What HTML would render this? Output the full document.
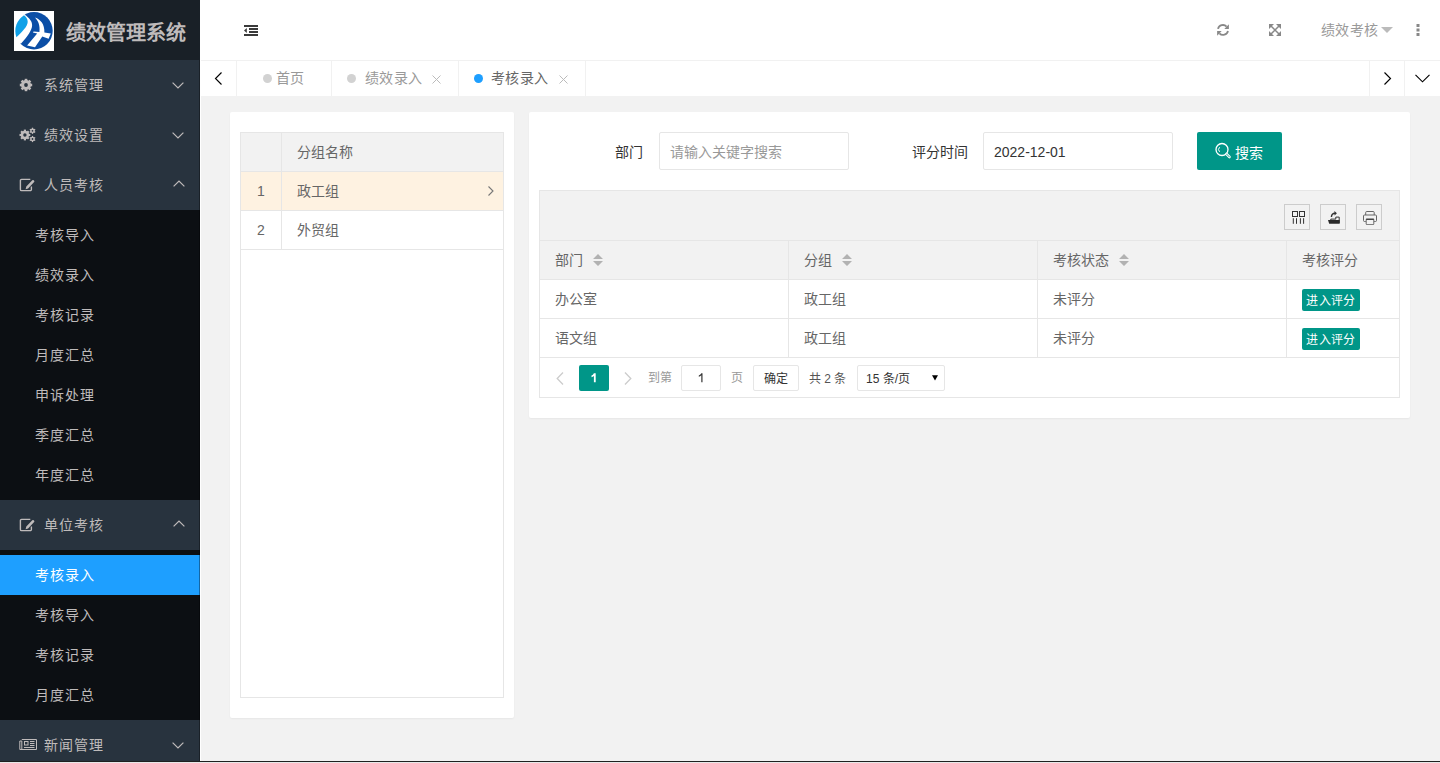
<!DOCTYPE html>
<html lang="zh-CN">
<head>
<meta charset="utf-8">
<style>
*{margin:0;padding:0;box-sizing:border-box;}
html,body{width:1440px;height:763px;overflow:hidden;font-family:"Liberation Sans",sans-serif;font-size:14px;color:#666;background:#f2f2f2;}
.abs{position:absolute;}
#side{position:absolute;left:0;top:0;width:200px;height:763px;background:#28333E;}
#logo{position:absolute;left:0;top:0;width:200px;height:60px;background:#192027;}
#logo .img{position:absolute;left:14px;top:11px;width:40px;height:40px;background:#fff;}
#logo .t{position:absolute;left:66px;top:17.5px;font-size:20px;font-weight:bold;color:rgb(191,187,187);line-height:30px;}
.mi{position:absolute;left:0;width:200px;height:50px;line-height:50px;color:rgb(191,187,187);}
.mi .ic{position:absolute;left:19px;top:18px;}
.mi .tx{position:absolute;left:44px;top:0;letter-spacing:1px;}
.mi .ar{position:absolute;left:172px;top:82px;}
.sub{position:absolute;left:0;width:200px;background:#0c0f13;}
.si{position:absolute;left:0;width:200px;height:40px;line-height:40px;color:rgb(191,187,187);}
.si span{position:absolute;left:35px;letter-spacing:1px;}
.si.on{background:#1E9FFF;color:#fff;}
#head{position:absolute;left:200px;top:0;width:1240px;height:60px;background:#fff;}
#tabs{position:absolute;left:200px;top:60px;width:1240px;height:36px;background:#fff;border-top:1px solid #f1f1f1;}
.tab{position:absolute;top:0;height:35px;line-height:35px;border-right:1px solid #f1f1f1;color:#999;}
.dot{position:absolute;width:9px;height:9px;border-radius:50%;background:#d2d2d2;top:13px;}
.card{position:absolute;background:#fff;border-radius:2px;box-shadow:0 1px 2px 0 rgba(0,0,0,.05);}
.bd{border:1px solid #e6e6e6;}
.sort{position:absolute;top:142px;}
.tb{position:absolute;top:92px;width:26px;height:26px;border:1px solid #ccc;}
</style>
</head>
<body>
<div id="side">
  <div id="logo">
    <div class="img">
      <svg width="40" height="40" viewBox="0 0 40 40">
        <circle cx="20" cy="19.8" r="18.7" fill="#0b4ea6"/>
        <path d="M10.5 3.6C15.5 7 18.5 11 18.1 14.7C17.8 19 14 25 7.1 32.5L0 33V0H10.5Z" fill="#fff"/>
        <path d="M10 4.2A18.7 18.7 0 0 0 2.4 26.2C8 21 13.5 15.5 13.7 11C13.8 8 12 5.5 10 4.2Z" fill="#10a1e8"/>
        <path d="M21 6.5C26.5 8.5 30.8 13 30.4 21.6L36.8 22.6L34.6 27.8L28.3 25.6L21 36.3L13.1 34.6L23.2 22.6L18.9 21.4L19.6 20.4L25.4 20.9C26.2 15 24.5 10 21 6.5Z" fill="#fff"/>
      </svg>
    </div>
    <div class="t">绩效管理系统</div>
  </div>
  <div class="mi" style="top:60px"><svg class="ic" width="16" height="16" viewBox="0 0 16 16" style="left:19px;top:18px"><g fill="rgb(191,187,187)"><circle cx="7" cy="7" r="5"/><rect x="5.7" y="0.8" width="2.6" height="12.4"/><rect x="0.8" y="5.7" width="12.4" height="2.6"/><rect x="5.7" y="0.8" width="2.6" height="12.4" transform="rotate(45 7 7)"/><rect x="5.7" y="0.8" width="2.6" height="12.4" transform="rotate(-45 7 7)"/></g><circle cx="7" cy="7" r="1.9" fill="#28333E"/></svg><span class="tx">系统管理</span></div>
  <div class="mi" style="top:110px"><svg class="ic" width="20" height="18" viewBox="0 0 20 18" style="left:18px;top:16px"><circle cx="6.9" cy="9" r="4.2" fill="rgb(191,187,187)"/><rect x="5.800000000000001" y="3.5999999999999996" width="2.2" height="10.8" fill="rgb(191,187,187)" transform="rotate(0.0 6.9 9)"/><rect x="5.800000000000001" y="3.5999999999999996" width="2.2" height="10.8" fill="rgb(191,187,187)" transform="rotate(45.0 6.9 9)"/><rect x="5.800000000000001" y="3.5999999999999996" width="2.2" height="10.8" fill="rgb(191,187,187)" transform="rotate(90.0 6.9 9)"/><rect x="5.800000000000001" y="3.5999999999999996" width="2.2" height="10.8" fill="rgb(191,187,187)" transform="rotate(135.0 6.9 9)"/><circle cx="6.9" cy="9" r="1.7" fill="#28333E"/><circle cx="14.5" cy="4.8" r="2.3" fill="rgb(191,187,187)"/><rect x="13.85" y="1.6999999999999997" width="1.3" height="6.2" fill="rgb(191,187,187)" transform="rotate(0.0 14.5 4.8)"/><rect x="13.85" y="1.6999999999999997" width="1.3" height="6.2" fill="rgb(191,187,187)" transform="rotate(60.0 14.5 4.8)"/><rect x="13.85" y="1.6999999999999997" width="1.3" height="6.2" fill="rgb(191,187,187)" transform="rotate(120.0 14.5 4.8)"/><circle cx="14.5" cy="4.8" r="0.9" fill="#28333E"/><circle cx="14.5" cy="13" r="2.3" fill="rgb(191,187,187)"/><rect x="13.85" y="9.9" width="1.3" height="6.2" fill="rgb(191,187,187)" transform="rotate(0.0 14.5 13)"/><rect x="13.85" y="9.9" width="1.3" height="6.2" fill="rgb(191,187,187)" transform="rotate(60.0 14.5 13)"/><rect x="13.85" y="9.9" width="1.3" height="6.2" fill="rgb(191,187,187)" transform="rotate(120.0 14.5 13)"/><circle cx="14.5" cy="13" r="0.9" fill="#28333E"/></svg><span class="tx">绩效设置</span></div>
  <div class="mi" style="top:160px"><svg class="ic" width="16" height="14" viewBox="0 0 16 14" style="left:19px;top:18px"><path d="M11.3 1.4H2.6a1.2 1.2 0 0 0-1.2 1.2v8.8a1.2 1.2 0 0 0 1.2 1.2h8.6a1.2 1.2 0 0 0 1.2-1.2V8.6" stroke="rgb(191,187,187)" stroke-width="1.4" fill="none"/><path d="M6.6 11.2l.7-2.6 6-6.3a1 1 0 0 1 1.4 0l.4.4a1 1 0 0 1 0 1.4l-6 6.3z" fill="rgb(191,187,187)"/></svg><span class="tx">人员考核</span></div>
  <div class="sub" style="top:210px;height:290px">
    <div class="si" style="top:5px"><span>考核导入</span></div>
    <div class="si" style="top:45px"><span>绩效录入</span></div>
    <div class="si" style="top:85px"><span>考核记录</span></div>
    <div class="si" style="top:125px"><span>月度汇总</span></div>
    <div class="si" style="top:165px"><span>申诉处理</span></div>
    <div class="si" style="top:205px"><span>季度汇总</span></div>
    <div class="si" style="top:245px"><span>年度汇总</span></div>
  </div>
  <div class="mi" style="top:500px"><svg class="ic" width="16" height="14" viewBox="0 0 16 14" style="left:19px;top:18px"><path d="M11.3 1.4H2.6a1.2 1.2 0 0 0-1.2 1.2v8.8a1.2 1.2 0 0 0 1.2 1.2h8.6a1.2 1.2 0 0 0 1.2-1.2V8.6" stroke="rgb(191,187,187)" stroke-width="1.4" fill="none"/><path d="M6.6 11.2l.7-2.6 6-6.3a1 1 0 0 1 1.4 0l.4.4a1 1 0 0 1 0 1.4l-6 6.3z" fill="rgb(191,187,187)"/></svg><span class="tx">单位考核</span></div>
  <div class="sub" style="top:550px;height:170px">
    <div class="si on" style="top:5px"><span>考核录入</span></div>
    <div class="si" style="top:45px"><span>考核导入</span></div>
    <div class="si" style="top:85px"><span>考核记录</span></div>
    <div class="si" style="top:125px"><span>月度汇总</span></div>
  </div>
  <div class="mi" style="top:720px"><svg class="ic" width="18" height="13" viewBox="0 0 18 13" style="left:19px;top:18px"><g fill="none" stroke="rgb(191,187,187)" stroke-width="1"><path d="M2.8 1.5H17.5V11.5H0.8V3H2.8V11.5"/><rect x="5.5" y="3.5" width="3.5" height="3.5"/><path d="M11 3.5H15.5M11 5.5H15.5M11 7.5H15.5M5 9.5H15.5"/></g></svg><span class="tx">新闻管理</span></div>
  <svg class="abs" style="left:172px;top:82px" width="12" height="7" viewBox="0 0 12 7"><path d="M0.6 0.6L6 6l5.4-5.4" stroke="rgb(191,187,187)" stroke-width="1.2" fill="none"/></svg>
  <svg class="abs" style="left:172px;top:132px" width="12" height="7" viewBox="0 0 12 7"><path d="M0.6 0.6L6 6l5.4-5.4" stroke="rgb(191,187,187)" stroke-width="1.2" fill="none"/></svg>
  <svg class="abs" style="left:173px;top:180px" width="12" height="7" viewBox="0 0 12 7"><path d="M0.6 6.4L6 1l5.4 5.4" stroke="rgb(191,187,187)" stroke-width="1.2" fill="none"/></svg>
  <svg class="abs" style="left:173px;top:520px" width="12" height="7" viewBox="0 0 12 7"><path d="M0.6 6.4L6 1l5.4 5.4" stroke="rgb(191,187,187)" stroke-width="1.2" fill="none"/></svg>
  <svg class="abs" style="left:172px;top:742px" width="12" height="7" viewBox="0 0 12 7"><path d="M0.6 0.6L6 6l5.4-5.4" stroke="rgb(191,187,187)" stroke-width="1.2" fill="none"/></svg>
</div>

<div id="head">
  <svg class="abs" style="left:44px;top:25px" width="14" height="11" viewBox="0 0 14 11"><path d="M0 1h14M5 4h9M5 7h9M0 10h14" stroke="#3a3a3a" stroke-width="1.8"/><path d="M0 5.5l2.8-2.5v5z" fill="#3a3a3a"/></svg>
  <svg class="abs" style="left:1016px;top:23px" width="14" height="14" viewBox="0 0 14 14"><path d="M2 5.9A5.1 5.1 0 0 1 10.6 3.6" stroke="#888" stroke-width="1.8" fill="none"/><path d="M12.9 1.2V5.9H8.3Z" fill="#888"/><path d="M12 8A5.1 5.1 0 0 1 3.4 10.4" stroke="#888" stroke-width="1.8" fill="none"/><path d="M1.1 8.1H5.7L1.1 12.7Z" fill="#888"/></svg>
  <svg class="abs" style="left:1068px;top:23px" width="14" height="14" viewBox="0 0 14 14"><path d="M2.5 2.5l9 9M11.5 2.5l-9 9" stroke="#888" stroke-width="1.5"/><path d="M1 1h5l-5 5zM13 1h-5l5 5zM1 13h5l-5-5zM13 13h-5l5-5z" fill="#888"/></svg>
  <span class="abs" style="left:1121px;top:20px;line-height:20px;color:#999;letter-spacing:0.3px">绩效考核</span>
  <svg class="abs" style="left:1181px;top:27px" width="12" height="7" viewBox="0 0 12 7"><path d="M0 0h12l-6 6z" fill="#bbb"/></svg>
  <svg class="abs" style="left:1216px;top:24px" width="4" height="12" viewBox="0 0 4 12"><rect x="0.5" y="0" width="3" height="3" fill="#888"/><rect x="0.5" y="4.5" width="3" height="3" fill="#888"/><rect x="0.5" y="9" width="3" height="3" fill="#888"/></svg>
</div>

<div id="tabs">
  <div class="tab" style="left:0;width:37px;"><svg class="abs" style="left:14px;top:11px" width="9" height="13" viewBox="0 0 9 13"><path d="M7.5 0.5L1.5 6.5l6 6" stroke="#000" stroke-width="1.15" fill="none"/></svg></div>
  <div class="tab" style="left:37px;width:95px;"><span class="dot" style="left:26px"></span><span class="abs" style="left:39px">首页</span></div>
  <div class="tab" style="left:132px;width:127px;"><span class="dot" style="left:15px"></span><span class="abs" style="left:33px;letter-spacing:0.4px">绩效录入</span><svg class="abs" style="left:100px;top:14px" width="9" height="9" viewBox="0 0 9 9"><path d="M0.5 0.5l8 8M8.5 0.5l-8 8" stroke="#bbb" stroke-width="1"/></svg></div>
  <div class="tab" style="left:259px;width:127px;"><span class="dot" style="left:15px;background:#1e9fff"></span><span class="abs" style="left:32px;color:#666;letter-spacing:0.4px">考核录入</span><svg class="abs" style="left:100px;top:14px" width="9" height="9" viewBox="0 0 9 9"><path d="M0.5 0.5l8 8M8.5 0.5l-8 8" stroke="#bbb" stroke-width="1"/></svg></div>
  <div class="tab" style="left:1169px;width:36px;border-left:1px solid #f1f1f1;"><svg class="abs" style="left:13px;top:11px" width="9" height="13" viewBox="0 0 9 13"><path d="M1.5 0.5l6 6-6 6" stroke="#000" stroke-width="1.15" fill="none"/></svg></div>
  <div class="tab" style="left:1205px;width:35px;border-right:none"><svg class="abs" style="left:10px;top:13px" width="15" height="9" viewBox="0 0 15 9"><path d="M0.5 0.8l7 7 7-7" stroke="#000" stroke-width="1.15" fill="none"/></svg></div>
</div>

<!-- left card -->
<div class="card" style="left:230px;top:112px;width:284px;height:606px;">
  <div class="abs bd" style="left:10px;top:20px;width:264px;height:566px;"></div>
  <div class="abs" style="left:11px;top:21px;width:262px;height:39px;background:#f2f2f2;border-bottom:1px solid #e6e6e6"></div>
  <div class="abs" style="left:11px;top:60px;width:262px;height:39px;background:#fef2e1;border-bottom:1px solid #e6e6e6"></div>
  <div class="abs" style="left:11px;top:99px;width:262px;height:39px;background:#fff;border-bottom:1px solid #e6e6e6"></div>
  <div class="abs" style="left:51px;top:21px;width:1px;height:117px;background:#e6e6e6"></div>
  <span class="abs" style="left:67px;top:30px;line-height:20px">分组名称</span>
  <span class="abs" style="left:27px;top:69px;line-height:20px">1</span>
  <span class="abs" style="left:67px;top:69px;line-height:20px">政工组</span>
  <svg class="abs" style="left:258px;top:73.5px" width="6" height="10" viewBox="0 0 6 10"><path d="M0.5 0.5l4.5 4.5-4.5 4.5" stroke="#777" stroke-width="1.1" fill="none"/></svg>
  <span class="abs" style="left:27px;top:108px;line-height:20px">2</span>
  <span class="abs" style="left:67px;top:108px;line-height:20px">外贸组</span>
</div>

<!-- right card -->
<div class="card" style="left:529px;top:112px;width:881px;height:306px;">
  <span class="abs" style="left:86px;top:30px;line-height:20px;color:#333">部门</span>
  <div class="abs" style="left:130px;top:20px;width:190px;height:38px;border:1px solid #e6e6e6;border-radius:2px;"><span class="abs" style="left:10px;top:9px;line-height:20px;color:#999">请输入关键字搜索</span></div>
  <span class="abs" style="left:383px;top:30px;line-height:20px;color:#333">评分时间</span>
  <div class="abs" style="left:454px;top:20px;width:190px;height:38px;border:1px solid #e6e6e6;border-radius:2px;"><span class="abs" style="left:10px;top:9px;line-height:20px;color:#333">2022-12-01</span></div>
  <div class="abs" style="left:668px;top:20px;width:85px;height:38px;background:#009688;border-radius:2px;color:#fff;">
    <svg class="abs" style="left:18px;top:10px" width="18" height="18" viewBox="0 0 18 18"><circle cx="7" cy="7.5" r="6" stroke="#fff" stroke-width="1.3" fill="none"/><path d="M4.6 5.2a3.2 3.2 0 0 0 0 4.6" stroke="#fff" stroke-width="1" fill="none"/><path d="M11.5 12l3 3" stroke="#fff" stroke-width="2.6" stroke-linecap="round"/><path d="M11.5 12l3 3" stroke="#009688" stroke-width="0.9" stroke-linecap="round"/></svg>
    <span class="abs" style="left:38px;top:11px;line-height:20px;">搜索</span>
  </div>
  <!-- table -->
  <div class="abs bd" style="left:10px;top:78px;width:861px;height:208px;"></div>
  <div class="abs" style="left:11px;top:79px;width:859px;height:50px;background:#f2f2f2;border-bottom:1px solid #e6e6e6"></div>
  <div class="abs" style="left:11px;top:129px;width:859px;height:39px;background:#f2f2f2;border-bottom:1px solid #e6e6e6"></div>
  <div class="abs" style="left:11px;top:168px;width:859px;height:39px;border-bottom:1px solid #e6e6e6"></div>
  <div class="abs" style="left:11px;top:207px;width:859px;height:39px;border-bottom:1px solid #e6e6e6"></div>
  <div class="abs" style="left:259px;top:129px;width:1px;height:117px;background:#e6e6e6"></div>
  <div class="abs" style="left:508px;top:129px;width:1px;height:117px;background:#e6e6e6"></div>
  <div class="abs" style="left:757px;top:129px;width:1px;height:117px;background:#e6e6e6"></div>
  <div class="tb" style="left:755px"><svg class="abs" style="left:7px;top:6px" width="14" height="14" viewBox="0 0 14 14"><g fill="none" stroke="#333" stroke-width="1"><rect x="0.5" y="0.5" width="5" height="5"/><rect x="7.5" y="0.5" width="5" height="5"/><path d="M1.3 7.2v5.6M4.5 7.2v5.6M8.4 7.2v5.6M11.6 7.2v5.6"/></g></svg></div>
  <div class="tb" style="left:791px"><svg class="abs" style="left:7px;top:6px" width="14" height="14" viewBox="0 0 14 14"><path d="M2.8 9V8.1H7.8V6.1H11.2V12" fill="none" stroke="#333" stroke-width="1"/><path d="M0 9H11.7V12.7H1.2Z" fill="#2a2a2a"/><path d="M3.4 6C3.5 3.8 5 2.4 7.2 2.3" stroke="#333" stroke-width="1.4" fill="none"/><path d="M6.4 0.1L8.9 2.3 6.6 4.4Z" fill="#333"/></svg></div>
  <div class="tb" style="left:827px"><svg class="abs" style="left:6px;top:6px" width="14" height="14" viewBox="0 0 14 14"><g fill="none" stroke="#666" stroke-width="1"><path d="M2.7 4V1.5a1 1 0 0 1 1-1h6.5a1 1 0 0 1 1 1V4"/><path d="M2.8 10.5H1.5a1 1 0 0 1-1-1V5a1 1 0 0 1 1-1h11a1 1 0 0 1 1 1v4.5a1 1 0 0 1-1 1h-1.3"/><path d="M3.2 8.3h7.6v4.6a.8 .8 0 0 1-.8.8H4a.8 .8 0 0 1-.8-.8z"/></g><path d="M3.2 8.3h7.6" stroke="#444" stroke-width="1.4"/></svg></div>
  <span class="abs" style="left:26px;top:138px;line-height:20px">部门</span>
  <svg class="sort" style="left:64px" width="10" height="12" viewBox="0 0 10 12"><path d="M0 5L5 0l5 5zM0 7h10l-5 5z" fill="#b2b2b2"/></svg>
  <span class="abs" style="left:275px;top:138px;line-height:20px">分组</span>
  <svg class="sort" style="left:313px" width="10" height="12" viewBox="0 0 10 12"><path d="M0 5L5 0l5 5zM0 7h10l-5 5z" fill="#b2b2b2"/></svg>
  <span class="abs" style="left:524px;top:138px;line-height:20px">考核状态</span>
  <svg class="sort" style="left:590px" width="10" height="12" viewBox="0 0 10 12"><path d="M0 5L5 0l5 5zM0 7h10l-5 5z" fill="#b2b2b2"/></svg>
  <span class="abs" style="left:773px;top:138px;line-height:20px">考核评分</span>
  <span class="abs" style="left:26px;top:177px;line-height:20px">办公室</span>
  <span class="abs" style="left:275px;top:177px;line-height:20px">政工组</span>
  <span class="abs" style="left:524px;top:177px;line-height:20px">未评分</span>
  <span class="abs" style="left:26px;top:216px;line-height:20px">语文组</span>
  <span class="abs" style="left:275px;top:216px;line-height:20px">政工组</span>
  <span class="abs" style="left:524px;top:216px;line-height:20px">未评分</span>
  <div class="abs" style="left:773px;top:177px;width:58px;height:22px;background:#009688;border-radius:2px;color:#fff;font-size:12px;line-height:24px;text-align:center;font-weight:500;letter-spacing:0.4px">进入评分</div>
  <div class="abs" style="left:773px;top:216px;width:58px;height:22px;background:#009688;border-radius:2px;color:#fff;font-size:12px;line-height:24px;text-align:center;font-weight:500;letter-spacing:0.4px">进入评分</div>
  <!-- pager -->
  <svg class="abs" style="left:27px;top:260px" width="8" height="13" viewBox="0 0 8 13"><path d="M7 0.5L1.2 6.5 7 12.5" stroke="#ccc" stroke-width="1.3" fill="none"/></svg>
  <div class="abs" style="left:50px;top:253px;width:30px;height:26px;background:#009688;border-radius:2px;"><svg class="abs" style="left:12px;top:8px" width="6" height="10" viewBox="0 0 6 10"><path d="M2.9 0.2h1.8v9H2.9V2.9C2.2 3.5 1.3 3.9 0.5 4.2V2.6C1.6 2.1 2.4 1.3 2.9 0.2z" fill="#fff"/></svg></div>
  <svg class="abs" style="left:95px;top:260px" width="8" height="13" viewBox="0 0 8 13"><path d="M1 0.5l5.8 6L1 12.5" stroke="#ccc" stroke-width="1.3" fill="none"/></svg>
  <span class="abs" style="left:119px;top:257px;font-size:12px;line-height:18px;color:#999">到第</span>
  <div class="abs" style="left:152px;top:253px;width:40px;height:26px;border:1px solid #e6e6e6;border-radius:2px;"><svg class="abs" style="left:16px;top:7px" width="6" height="10" viewBox="0 0 6 10"><path d="M3.3 0.3h1.2v9H3.3V2.2C2.6 2.9 1.6 3.4 0.8 3.7V2.6C2 2.1 2.9 1.2 3.3 0.3z" fill="#333"/></svg></div>
  <span class="abs" style="left:202px;top:257px;font-size:12px;line-height:18px;color:#999">页</span>
  <div class="abs" style="left:224px;top:253px;width:46px;height:26px;border:1px solid #e6e6e6;border-radius:2px;font-size:12px;line-height:26px;text-align:center;color:#333">确定</div>
  <span class="abs" style="left:280px;top:258px;font-size:12px;line-height:18px;color:#555">共 2 条</span>
  <div class="abs" style="left:328px;top:253px;width:88px;height:26px;border:1px solid #e6e6e6;border-radius:2px;font-size:12px;line-height:26px;color:#333"><span class="abs" style="left:8px">15 条/页</span><svg class="abs" style="left:74px;top:9px" width="6" height="6" viewBox="0 0 6 6"><path d="M0 0.2h6l-3 5.3z" fill="#000"/></svg></div>
</div>
<div class="abs" style="left:200px;top:0;width:1px;height:761px;background:#fff"></div>
<div class="abs" style="left:199px;top:60px;width:1px;height:701px;background:rgba(0,0,0,.35)"></div>
<div class="abs" style="left:0;top:761px;width:1440px;height:1px;background:#202020"></div>
<div class="abs" style="left:0;top:762px;width:1440px;height:1px;background:#e8e8e8"></div>
</body>
</html>
